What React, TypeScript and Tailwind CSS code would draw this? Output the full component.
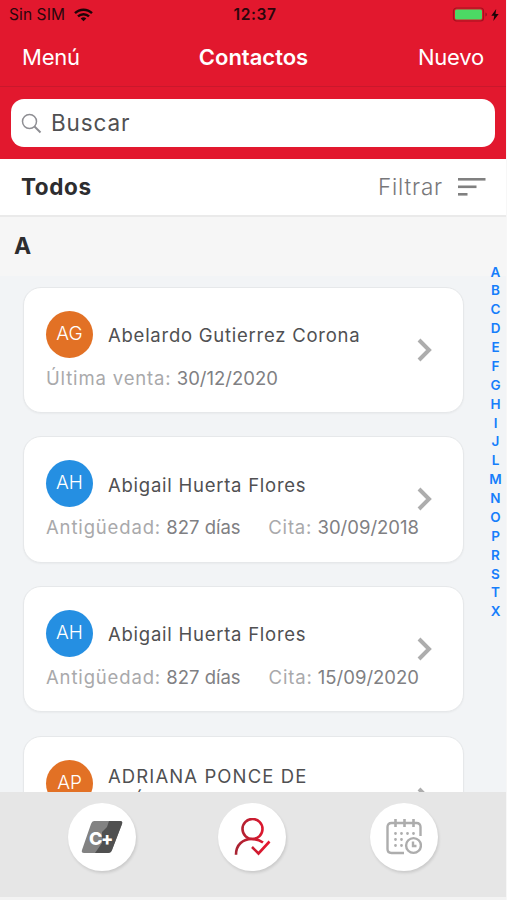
type Contact = {
  initials: string;
  name: string;
  color: string;
  details: { label: string; value: string }[];
};

const contacts: Contact[] = [
  {
    initials: "AG",
    name: "Abelardo Gutierrez Corona",
    color: "bg-[#e27125]",
    details: [{ label: "Última venta:", value: "30/12/2020" }],
  },
  {
    initials: "AH",
    name: "Abigail Huerta Flores",
    color: "bg-[#258fe2]",
    details: [
      { label: "Antigüedad:", value: "827 días" },
      { label: "Cita:", value: "30/09/2018" },
    ],
  },
  {
    initials: "AH",
    name: "Abigail Huerta Flores",
    color: "bg-[#258fe2]",
    details: [
      { label: "Antigüedad:", value: "827 días" },
      { label: "Cita:", value: "15/09/2020" },
    ],
  },
  {
    initials: "AP",
    name: "ADRIANA PONCE DE LEÓN",
    color: "bg-[#e27125]",
    details: [],
  },
];

const letters = "ABCDEFGHIJLMNOPRSTX".split("");

function StatusBar() {
  return (
    <div className="grid h-[29px] grid-cols-3 items-center pl-[9px] pr-[7px] text-[#2b060b]">
      <div className="flex items-center gap-[9px]">
        <span className="text-[15.5px] tracking-[0.1px]">Sin SIM</span>
        <svg width="19" height="14" viewBox="0 0 19 14" fill="none" stroke="#1d0407" strokeWidth="2.4">
          <path d="M1 5.2C5.7.6 13.3.6 18 5.2" />
          <path d="M4 8.4c3-2.9 8-2.9 11 0" />
          <path d="M9.5 13.2 6.7 10.400c1.600-1.500 4-1.500 5.600 0z" fill="#1d0407" stroke="none" />
        </svg>
      </div>
      <span className="pl-[2px] text-center text-[15.5px] font-semibold tracking-[0.6px]">12:37</span>
      <div className="flex items-center justify-end gap-[3px]">
        <svg width="36" height="15" viewBox="0 0 36 15">
          <rect x="1.500" y="1" width="30" height="13" rx="3" fill="none" stroke="#a3121f" strokeWidth="1.200" />
          <rect x="3" y="2.500" width="27" height="10" rx="1.500" fill="#4cd964" />
          <path d="M33.500 5.500c1.800.6 1.800 3.400 0 4z" fill="#8e101f" />
        </svg>
        <svg width="8" height="12" viewBox="0 0 8 12" fill="#1d0407">
          <path d="M5.200 0 .3 6.800h3L2.300 12 7.700 4.900H4.500z" />
        </svg>
      </div>
    </div>
  );
}

function ContactCard({ contact }: { contact: Contact }) {
  const long = contact.details.length === 0;
  return (
    <div className="flex h-[126.5px] w-[441px] shrink-0 rounded-[18px] border border-[#e6e8ea] bg-white pl-[22.5px] shadow-[0_1px_2px_rgba(0,0,0,0.04)]">
      <div className="w-[371px] pt-[23px]">
        <div className="flex h-[47px] gap-[15px]">
          <div
            className={`flex size-[47px] shrink-0 items-center justify-center rounded-full text-[19px] font-light text-white ${contact.color}`}
          >
            {contact.initials}
          </div>
          <span
            className={`leading-[24px] text-[#505052] ${
              long
                ? "w-[220px] pt-[4px] text-[18.5px] tracking-[1.1px]"
                : "whitespace-nowrap pt-[12.5px] text-[18.5px] tracking-[0.75px]"
            }`}
          >
            {contact.name}
          </span>
        </div>
        <div className="flex w-[373px] justify-between whitespace-nowrap pt-[8px] text-[18.5px] leading-[24px]">
          {contact.details.map((d) => (
            <span key={d.label} className="text-[#808083]">
              <span className="tracking-[0.85px] text-[#a9a9ab]">{d.label}</span> {d.value}
            </span>
          ))}
        </div>
      </div>
      <svg className="mt-[50px] shrink-0" width="15" height="24" viewBox="0 0 15 24" fill="none" stroke="#adadad" strokeWidth="4">
        <path d="m2 2 10 10-10 10" />
      </svg>
    </div>
  );
}

function TabBar() {
  const button = "flex size-[68px] items-center justify-center rounded-full bg-white shadow-[1px_2px_3px_rgba(0,0,0,0.12)]";
  return (
    <nav className="relative z-10 flex h-[108px] shrink-0 border-b-[3px] border-[#f3f3f3] bg-[#e6e6e6] pl-[68px] pt-[11px]">
      <div className={button}>
        <svg width="42" height="34" viewBox="0 0 42 34">
          <path d="M13 1h26q3 0 2 3L31 30q-1 3-4 3H3q-3 0-2-3L10 4q1-3 3-3z" fill="#828282" />
          <path d="M28 1h11q3 0 2 3L31 30q-1 3-4 3H14l7-10V12l5-5z" fill="#505050" />
          <text x="8" y="24.5" fill="#fff" fontFamily="Inter" fontWeight="800" fontSize="18" letterSpacing="-1.5">
            C+
          </text>
        </svg>
      </div>
      <div className={`ml-[82px] ${button}`}>
        <svg width="38" height="38" viewBox="0 0 38 38" fill="none" strokeWidth="2.6">
          <defs>
            <linearGradient id="person" gradientUnits="userSpaceOnUse" x1="4" y1="0" x2="34" y2="0">
              <stop offset="0" stopColor="#a92332" />
              <stop offset="1" stopColor="#e4162e" />
            </linearGradient>
          </defs>
          <g stroke="url(#person)">
            <circle cx="19.500" cy="11" r="10" />
            <path d="M3 36.800C3 26.500 10 21 19 21c4.300 0 8 1.200 11 3.500" />
            <path d="m19 29 6.500 6.500L36.500 23.500" />
          </g>
        </svg>
      </div>
      <div className={`ml-[84px] ${button}`}>
        <svg width="36" height="36" viewBox="0 0 36 36" fill="none" stroke="#adadad" strokeWidth="2.4">
          <path d="M34.500 17V8q0-4-4-4H5.500q-4 0-4 4v22q0 4 4 4H18" />
          <path d="M9.500 0v8M18.500 0v8M27.500 0v8" strokeWidth="2.600" />
          <path d="M9.500 14.500h18.500M9.500 20.500h9M9.500 26.500h9" strokeWidth="2.800" strokeLinecap="round" strokeDasharray="0 6" />
          <circle cx="27.500" cy="26.500" r="7.400" />
          <path d="M27 22.500v4.500h3.500" />
        </svg>
      </div>
    </nav>
  );
}

export default function App() {
  return (
    <div className="h-[900px] w-[507px] overflow-hidden bg-[#f7f7f7] pr-px font-['Inter','Liberation_Sans',sans-serif]">
      <div className="flex h-full flex-col overflow-hidden">
        <header className="h-[159px] shrink-0 bg-[#e2182e]">
          <StatusBar />
          <div className="flex h-[58px] items-center justify-between border-b border-[#c9182c] px-[22px] text-[22px] text-white">
            <span className="w-[100px] tracking-[-0.2px]">Menú</span>
            <h1 className="pl-px text-[22px] font-semibold">Contactos</h1>
            <span className="w-[100px] text-right tracking-[-0.2px]">Nuevo</span>
          </div>
          <div className="mx-[11px] mt-[12px] flex h-[48px] items-center rounded-[13px] bg-white pl-[10px]">
            <svg width="21" height="21" viewBox="0 0 21 21" fill="none" stroke="#8e8e93" strokeWidth="1.5">
              <circle cx="8.500" cy="8.500" r="7" />
              <path d="m13.500 13.500 6 6" strokeWidth="2" />
            </svg>
            <span className="pl-[9px] text-[22.5px] tracking-[0.9px] text-[#505052]">Buscar</span>
          </div>
        </header>

        <div className="flex h-[57.5px] shrink-0 items-center border-b-2 border-[#eaeaea] bg-white pl-[21px] pr-[20px]">
          <span className="flex-1 text-[22.5px] font-bold tracking-[0.6px] text-[#2d2d2f]">Todos</span>
          <span className="text-[22.5px] font-light tracking-[0.8px] text-[#77777a]">Filtrar</span>
          <svg className="ml-[15px]" width="28" height="20" viewBox="0 0 28 20" fill="#808080">
            <rect y="1" width="27.500" height="2.600" />
            <rect y="8.500" width="18.500" height="2.600" />
            <rect y="16" width="9.500" height="2.600" />
          </svg>
        </div>

        <main className="relative flex min-h-0 flex-1 flex-col bg-[#f2f4f6]">
          <div className="flex h-[59px] shrink-0 items-center bg-[#f6f6f6] pl-[14px] text-[23px] font-bold text-[#2d2d2f]">
            A
          </div>
          <div className="flex min-h-0 flex-1 flex-col gap-[23.2px] overflow-hidden pl-[22.5px] pt-[11px]">
            {contacts.map((c, i) => (
              <ContactCard key={i} contact={c} />
            ))}
          </div>
          {/* alphabet index floats over the list */}
          <div className="absolute right-px top-[46px] flex w-[19px] flex-col text-center text-[13.5px] font-semibold leading-[18.87px] text-[#167efb]">
            {letters.map((l) => (
              <span key={l}>{l}</span>
            ))}
          </div>
        </main>

        <TabBar />
      </div>
    </div>
  );
}
